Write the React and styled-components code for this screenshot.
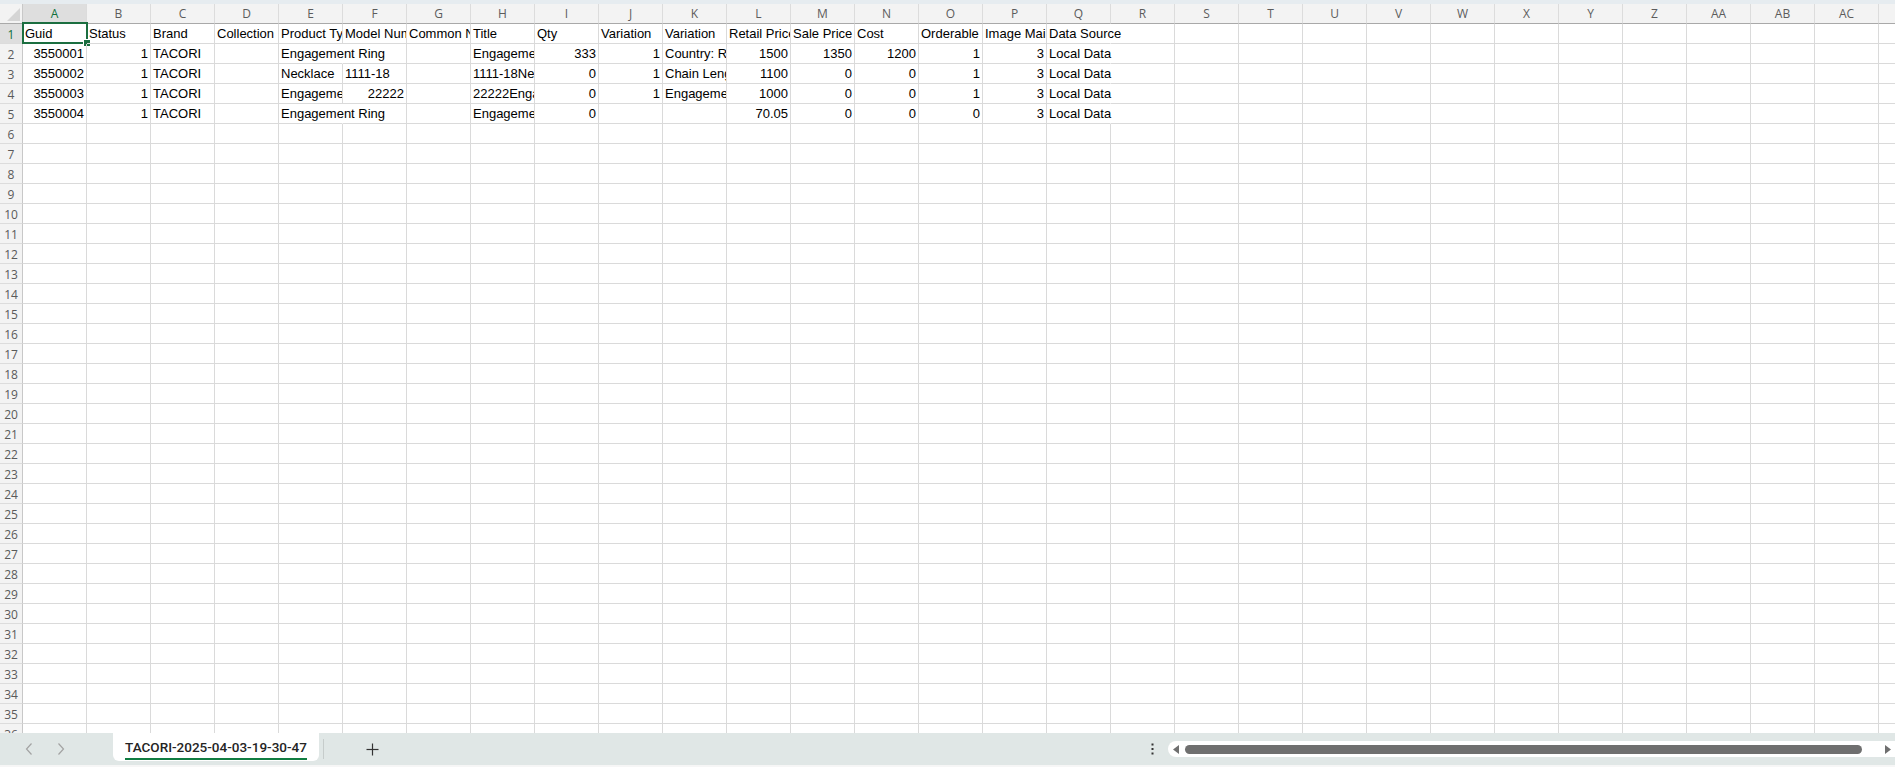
import React from 'react';
import styled, { createGlobalStyle, css } from 'styled-components';

const GlobalStyle = createGlobalStyle`
  html, body { margin: 0; padding: 0; background: #fff; overflow: hidden; }
  #root { width: 1895px; height: 767px; }
`;

const COLUMNS = [
  'A','B','C','D','E','F','G','H','I','J','K','L','M','N','O','P','Q','R','S','T','U','V','W','X','Y','Z','AA','AB','AC','AD',
];

const t = (v, spill = false) => ({ v, spill });
const n = (v) => ({ v, num: true });

const DATA = [
  {
    A: t('Guid'), B: t('Status'), C: t('Brand'), D: t('Collection'), E: t('Product Type'),
    F: t('Model Number'), G: t('Common Name'), H: t('Title'), I: t('Qty'), J: t('Variation'),
    K: t('Variation'), L: t('Retail Price'), M: t('Sale Price'), N: t('Cost'),
    O: t('Orderable'), P: t('Image Main'), Q: t('Data Source', true),
  },
  {
    A: n('3550001'), B: n('1'), C: t('TACORI'), E: t('Engagement Ring', true), H: t('Engagement Ring'),
    I: n('333'), J: n('1'), K: t('Country: Russia'), L: n('1500'), M: n('1350'), N: n('1200'),
    O: n('1'), P: n('3'), Q: t('Local Data', true),
  },
  {
    A: n('3550002'), B: n('1'), C: t('TACORI'), E: t('Necklace'), F: t('1111-18'), H: t('1111-18Necklace'),
    I: n('0'), J: n('1'), K: t('Chain Length: 18'), L: n('1100'), M: n('0'), N: n('0'),
    O: n('1'), P: n('3'), Q: t('Local Data', true),
  },
  {
    A: n('3550003'), B: n('1'), C: t('TACORI'), E: t('Engagement Ring'), F: n('22222'), H: t('22222Engagement Ring'),
    I: n('0'), J: n('1'), K: t('Engagement Ring Size'), L: n('1000'), M: n('0'), N: n('0'),
    O: n('1'), P: n('3'), Q: t('Local Data', true),
  },
  {
    A: n('3550004'), B: n('1'), C: t('TACORI'), E: t('Engagement Ring', true), H: t('Engagement Ring'),
    I: n('0'), L: n('70.05'), M: n('0'), N: n('0'),
    O: n('0'), P: n('3'), Q: t('Local Data', true),
  },
];

const ROW_COUNT = 36;
const GREEN = '#1b6e40';

const Page = styled.div`
  width: 1895px;
  height: 767px;
  display: flex;
  flex-direction: column;
  overflow: hidden;
  background: #fff;
`;

const TopStrip = styled.div`
  flex: 0 0 4px;
  background: #e6ecf0;
`;

const Sheet = styled.div`
  flex: 1 1 auto;
  min-height: 0;
  overflow: hidden;
  background: #fff;
`;

const Row = styled.div`
  display: flex;
  height: 20px;
`;

const HeaderRow = styled(Row)`
  background: #f3f3f3;
`;

const Corner = styled.div`
  flex: 0 0 23px;
  height: 20px;
  box-sizing: border-box;
  border-right: 1px solid #c8c8c8;
  border-bottom: 1px solid #a9a9a9;
  display: flex;
  align-items: flex-end;
  justify-content: flex-end;
  padding: 0 2px 2px 0;
`;

const ColHead = styled.div`
  flex: 0 0 64px;
  min-width: 0;
  height: 20px;
  box-sizing: border-box;
  border-right: 1px solid #dcdcdc;
  border-bottom: 1px solid #a9a9a9;
  display: flex;
  align-items: center;
  justify-content: center;
  font: 12px 'Open Sans', 'Noto Sans', sans-serif;
  color: #5c5c5c;
  ${(p) => p.$active && css`
    background: #dedede;
    color: #0f703b;
  `}
`;

const RowHead = styled.div`
  flex: 0 0 23px;
  height: 20px;
  box-sizing: border-box;
  background: #f3f3f3;
  border-right: 1px solid #c8c8c8;
  border-bottom: 1px solid #dcdcdc;
  display: flex;
  align-items: center;
  justify-content: center;
  padding-top: 2px;
  font: 12px 'Open Sans', 'Noto Sans', sans-serif;
  color: #5a5a5a;
  ${(p) => p.$active && css`
    background: #dedede;
    color: #0f703b;
  `}
`;

const Cell = styled.div`
  flex: 0 0 64px;
  min-width: 0;
  height: 20px;
  box-sizing: border-box;
  position: relative;
  border-right: 1px solid #dadada;
  border-bottom: 1px solid #dadada;
  padding: 0 2px;
  font-family: 'Liberation Sans', Arial, sans-serif;
  font-size: 13px;
  line-height: 20px;
  color: #000;
  white-space: nowrap;
  overflow: hidden;
  text-align: ${(p) => (p.$num ? 'right' : 'left')};
  ${(p) => p.$spill && css`
    overflow: visible;
    border-right-color: transparent;
  `}
  ${(p) => p.$selected && css`
    overflow: visible;
  `}
`;

const Selection = styled.div`
  position: absolute;
  left: -1px;
  top: -2px;
  width: 66px;
  height: 22px;
  box-sizing: border-box;
  border: 2px solid ${GREEN};
  pointer-events: none;
`;

const FillHandle = styled.div`
  position: absolute;
  right: -4px;
  bottom: -4px;
  width: 6px;
  height: 6px;
  background: ${GREEN};
  border-left: 1px solid #fff;
  border-top: 1px solid #fff;
`;

const TabBar = styled.div`
  flex: 0 0 32px;
  display: flex;
  align-items: center;
  background: #e0e7e6;
`;

const BottomEdge = styled.div`
  flex: 0 0 2px;
  background: #f6f6f6;
`;

const NavGroup = styled.div`
  flex: 0 0 113px;
  box-sizing: border-box;
  padding-left: 13px;
  display: flex;
  align-items: center;
`;

const IconButton = styled.div`
  flex: 0 0 ${(p) => p.$w || 32}px;
  height: 24px;
  display: flex;
  align-items: center;
  justify-content: center;
  color: ${(p) => p.$color || '#333'};
`;

const SheetTab = styled.div`
  align-self: flex-start;
  flex: 0 0 206px;
  height: 28px;
  box-sizing: border-box;
  background: #fff;
  border-radius: 0 0 6px 6px;
  display: flex;
  align-items: center;
  justify-content: center;
`;

const TabLabel = styled.span`
  display: inline-block;
  font-family: Roboto, 'Open Sans', sans-serif;
  font-weight: 500;
  font-size: 13.5px;
  line-height: 20px;
  color: #242424;
  padding-bottom: 1px;
  border-bottom: 2px solid #107c41;
  margin-top: 2px;
`;

const Separator = styled.div`
  flex: 0 0 1px;
  height: 20px;
  margin-left: 4px;
  background: #c6cccb;
`;

const AddButton = styled(IconButton)`
  margin-left: 32px;
`;

const Spacer = styled.div`
  flex: 1 1 auto;
`;

const MoreButton = styled(IconButton)`
  margin-right: 8px;
`;

const ScrollTrack = styled.div`
  flex: 0 0 735px;
  height: 16px;
  box-sizing: border-box;
  margin-right: -8px;
  padding-left: 5px;
  background: #fff;
  border-radius: 8px;
  display: flex;
  align-items: center;
`;

const ScrollThumb = styled.div`
  flex: 0 0 677px;
  height: 9px;
  margin: 0 23px 0 6px;
  border-radius: 5px;
  background: #6f6f6f;
`;

const CornerMark = () => (
  <svg width="13" height="13" viewBox="0 0 13 13">
    <polygon points="13,0 13,13 0,13" fill="#d5d5d5" />
  </svg>
);

const Chevron = ({ dir }) => (
  <svg width="8" height="14" viewBox="0 0 8 14">
    <polyline
      points={dir === 'left' ? '6.5,1.5 1.5,7 6.5,12.5' : '1.5,1.5 6.5,7 1.5,12.5'}
      fill="none"
      stroke="currentColor"
      strokeWidth="1.2"
    />
  </svg>
);

const PlusIcon = () => (
  <svg width="13" height="13" viewBox="0 0 13 13">
    <line x1="6.5" y1="0.5" x2="6.5" y2="12.5" stroke="currentColor" strokeWidth="1.2" />
    <line x1="0.5" y1="6.5" x2="12.5" y2="6.5" stroke="currentColor" strokeWidth="1.2" />
  </svg>
);

const DotsIcon = () => (
  <svg width="3" height="12" viewBox="0 0 3 12">
    <rect x="0.5" y="0.5" width="2" height="2" fill="currentColor" />
    <rect x="0.5" y="5" width="2" height="2" fill="currentColor" />
    <rect x="0.5" y="9.5" width="2" height="2" fill="currentColor" />
  </svg>
);

const Arrow = ({ dir }) => (
  <svg width="6" height="9" viewBox="0 0 6 9">
    <polygon points={dir === 'left' ? '6,0 6,9 0,4.5' : '0,0 0,9 6,4.5'} fill="#6f6f6f" />
  </svg>
);

function GridRow({ index }) {
  const data = DATA[index - 1] || {};
  return (
    <Row>
      <RowHead $active={index === 1}>{index}</RowHead>
      {COLUMNS.map((col) => {
        const cell = data[col];
        const selected = index === 1 && col === 'A';
        return (
          <Cell key={col} $num={cell?.num} $spill={cell?.spill} $selected={selected}>
            {cell?.v}
            {selected && (
              <Selection>
                <FillHandle />
              </Selection>
            )}
          </Cell>
        );
      })}
    </Row>
  );
}

export default function App() {
  return (
    <>
      <GlobalStyle />
      <Page>
        <TopStrip />
        <Sheet>
          <HeaderRow>
            <Corner>
              <CornerMark />
            </Corner>
            {COLUMNS.map((col) => (
              <ColHead key={col} $active={col === 'A'}>{col}</ColHead>
            ))}
          </HeaderRow>
          {Array.from({ length: ROW_COUNT }, (_, i) => (
            <GridRow key={i} index={i + 1} />
          ))}
        </Sheet>
        <TabBar>
          <NavGroup>
            <IconButton $color="#a3a3a3"><Chevron dir="left" /></IconButton>
            <IconButton $color="#a3a3a3"><Chevron dir="right" /></IconButton>
          </NavGroup>
          <SheetTab>
            <TabLabel>TACORI-2025-04-03-19-30-47</TabLabel>
          </SheetTab>
          <Separator />
          <AddButton $color="#333"><PlusIcon /></AddButton>
          <Spacer />
          <MoreButton $w={16} $color="#333"><DotsIcon /></MoreButton>
          <ScrollTrack>
            <Arrow dir="left" />
            <ScrollThumb />
            <Arrow dir="right" />
          </ScrollTrack>
        </TabBar>
        <BottomEdge />
      </Page>
    </>
  );
}
